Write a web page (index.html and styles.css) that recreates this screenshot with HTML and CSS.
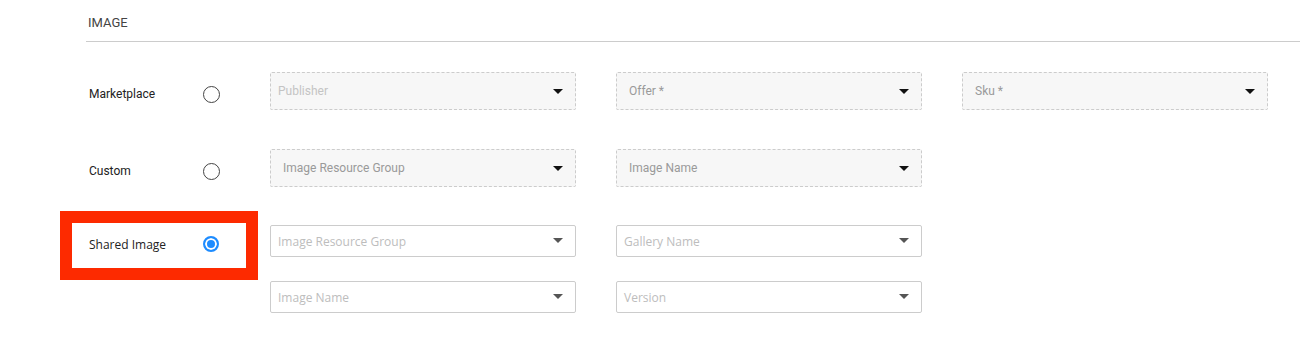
FILE: index.html
```html
<!DOCTYPE html>
<html lang="en">
<head>
  <meta charset="UTF-8">
  <meta name="viewport" content="width=device-width, initial-scale=1.0">
  <title>Image Source</title>
  <link rel="stylesheet" href="styles.css">
</head>
<body>

  <div class="section">
    <div class="section-title">IMAGE</div>

    <div class="rows">
      <!-- Marketplace -->
      <div class="row">
        <div class="choice">
          <span class="choice-label">Marketplace</span>
          <span class="radio"></span>
        </div>
        <div class="fields">
          <div class="select disabled light">Publisher<span class="caret"></span></div>
          <div class="select disabled">Offer *<span class="caret"></span></div>
          <div class="select disabled">Sku *<span class="caret"></span></div>
        </div>
      </div>

      <!-- Custom -->
      <div class="row">
        <div class="choice">
          <span class="choice-label">Custom</span>
          <span class="radio"></span>
        </div>
        <div class="fields">
          <div class="select disabled">Image Resource Group<span class="caret"></span></div>
          <div class="select disabled">Image Name<span class="caret"></span></div>
        </div>
      </div>

      <!-- Shared Image -->
      <div class="row shared">
        <div class="choice highlight">
          <span class="choice-label">Shared Image</span>
          <span class="radio checked"></span>
        </div>
        <div class="fields two">
          <div class="select active">Image Resource Group<span class="caret"></span></div>
          <div class="select active">Gallery Name<span class="caret"></span></div>
          <div class="select active">Image Name<span class="caret"></span></div>
          <div class="select active">Version<span class="caret"></span></div>
        </div>
      </div>
    </div>
  </div>

</body>
</html>
```

FILE: styles.css
```css
body {
  font-family: 'Roboto', sans-serif;
  margin: 0;
  padding: 0;
  background: #fff;
  color: #222;
}

.section {
  padding-left: 72px;
  padding-right: 3px;
}

.section-title {
  margin-left: 14px;
  padding: 15px 0 10px 2px;
  font-size: 13px;
  line-height: 16px;
  color: #444;
  border-bottom: 1px solid #ccc;
}

.rows {
  display: flex;
  flex-direction: column;
  gap: 39px;
  margin-top: 30px;
}

.row {
  display: flex;
  align-items: flex-start;
}

.row.shared {
  margin-top: -1px;
}

.choice {
  width: 174px;
  height: 45px;
  margin-bottom: -7px;
  padding-left: 17px;
  box-sizing: border-box;
  display: flex;
  align-items: center;
  flex-shrink: 0;
}

.choice-label {
  width: 114px;
  font-size: 12px;
  margin-top: -2px;
}

.choice.highlight {
  margin-top: -2px;
  margin-bottom: 0;
  outline: 12px solid #fd2a00;
}

.choice.highlight .choice-label {
  font-family: 'Open Sans', sans-serif;
  font-size: 12px;
  color: #222;
  margin-top: -3px;
}

.radio {
  width: 17px;
  height: 17px;
  box-sizing: border-box;
  border: 1px solid #444;
  border-radius: 50%;
  background: #fff;
}

.radio.checked {
  margin-top: -3px;
  border: 2px solid #1e8cff;
  box-shadow: inset 0 0 0 2px #fff;
  background: #1e8cff;
  width: 16px;
  height: 16px;
}

.fields {
  display: grid;
  grid-template-columns: repeat(3, 306px);
  column-gap: 40px;
  row-gap: 24px;
  margin-left: 24px;
}

.fields.two {
  grid-template-columns: repeat(2, 306px);
}

.select {
  position: relative;
  height: 38px;
  box-sizing: border-box;
  border-radius: 2px;
  display: flex;
  align-items: center;
  font-size: 12px;
}

.select.disabled {
  background: #f7f7f7;
  border: 1px dashed #ccc;
  color: #9a9a9a;
  padding-left: 12px;
}

.select.disabled.light {
  color: #c4c4c4;
  padding-left: 7px;
}

.select.active {
  height: 32px;
  background: #fff;
  border: 1px solid #ccc;
  color: #bdbdbd;
  padding-left: 7px;
  font-family: 'Open Sans', sans-serif;
  font-size: 12px;
}

.caret {
  position: absolute;
  right: 12px;
  top: 50%;
  margin-top: -2px;
  width: 0;
  height: 0;
  border-left: 5px solid transparent;
  border-right: 5px solid transparent;
  border-top: 5px solid #111;
}

.select.active .caret {
  border-top-color: #555;
  margin-top: -3px;
}
```
